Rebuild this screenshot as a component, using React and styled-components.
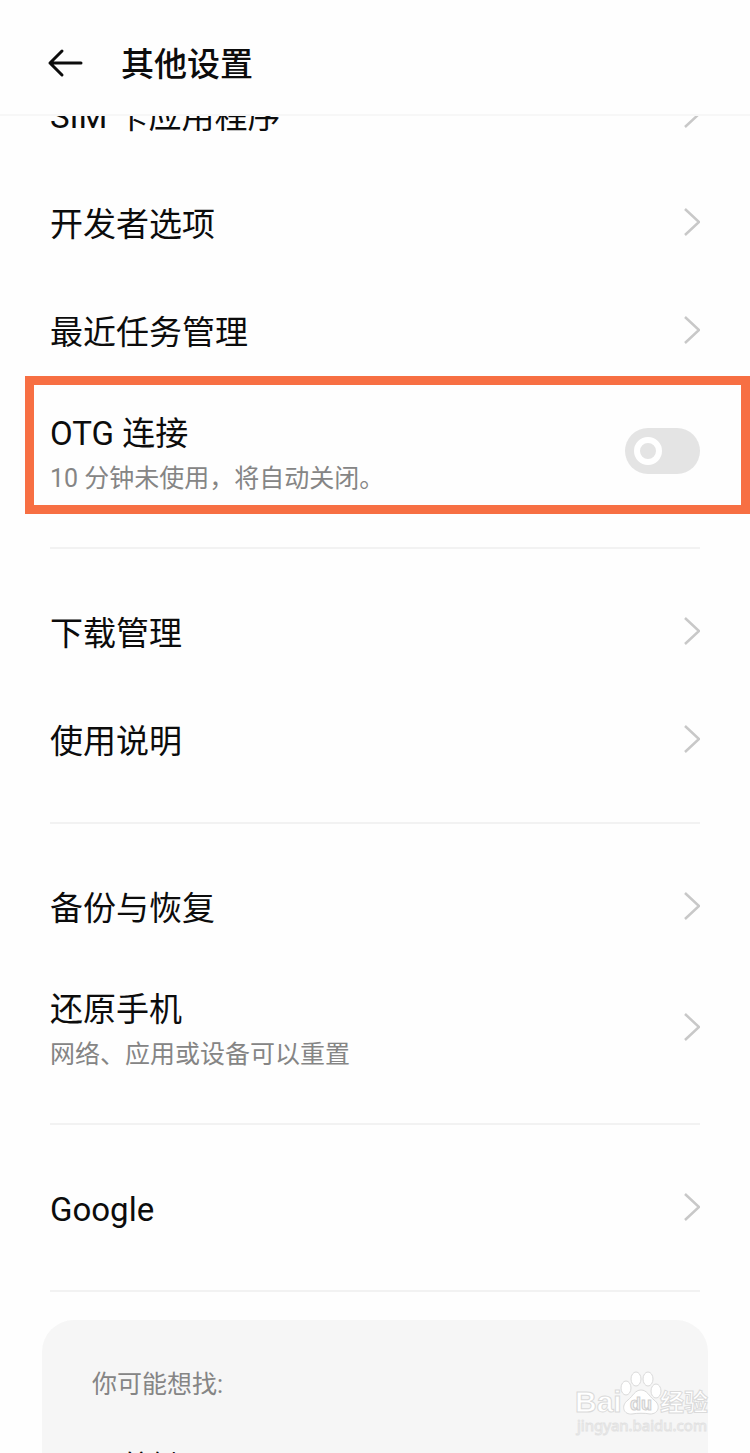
import React from 'react'
import styled, { createGlobalStyle } from 'styled-components'

const GlobalStyle = createGlobalStyle`
  *,
  *::before {
    box-sizing: border-box;
  }

  body {
    margin: 0;
    background: #fefefe;
    color: #0c0c0c;
    font-family: Roboto, 'Noto Sans CJK SC', sans-serif;
  }
`

const Screen = styled.div`
  position: relative;
  display: flex;
  flex-direction: column;
  height: 100vh;
  overflow: hidden;
`

const Header = styled.header`
  display: flex;
  flex: none;
  align-items: center;
  gap: 36px;
  padding: 36px 46px 24px;
  border-bottom: 2px solid #f7f7f7;
`

const BackButton = styled.button`
  display: flex;
  padding: 0;
  border: 0;
  background: none;
  color: inherit;
`

const PageTitle = styled.h1`
  margin: 0;
  padding-top: 4px;
  font-size: 33px;
  font-weight: 500;
  line-height: 50px;
`

const Content = styled.main`
  flex: 1;
  min-height: 0;
  overflow: hidden;
`

// the list is scrolled a little, so its first row slides under the header
const Scrolled = styled.div`
  margin-top: -56px;
`

const Group = styled.section`
  margin: 0 50px;
  padding-bottom: 29px;
  border-bottom: 2px solid #f2f2f2;

  & + & {
    padding-top: 28px;
  }
`

const Row = styled.div`
  position: relative;
  display: flex;
  align-items: center;
  justify-content: space-between;
  min-height: ${props => (props.$tall ? 134 : 108)}px;
  color: inherit;
  text-decoration: none;
`

const Label = styled.span`
  display: flex;
  flex-direction: column;
  padding-top: 6px;
`

const Name = styled.span`
  font-size: 33px;
  line-height: 50px;
`

const Note = styled.span`
  color: #858585;
  font-size: 25px;
  line-height: 40px;
`

const Switch = styled.input`
  appearance: none;
  display: flex;
  align-items: center;
  width: 75px;
  height: 46px;
  margin: 0;
  padding: 0 9px;
  border-radius: 23px;
  background: #e4e4e4;

  &::before {
    content: '';
    width: 28px;
    height: 28px;
    border: 6px solid #fff;
    border-radius: 50%;
  }

  &:checked {
    justify-content: flex-end;
    background: #2ac845;
  }
`

const Highlight = styled.div`
  position: absolute;
  top: -8px;
  right: -50px;
  bottom: 4px;
  left: -25px;
  border: 9px solid #f76f43;
  pointer-events: none;
`

const Suggestions = styled.aside`
  margin: 28px 42px 0;
  padding: 40px 50px;
  border-radius: 32px;
  background: #f6f6f6;
`

const SuggestTitle = styled.h2`
  margin: 0 0 32px;
  color: #858585;
  font-size: 25px;
  font-weight: 400;
  line-height: 50px;
`

const SuggestLink = styled.a`
  display: block;
  color: inherit;
  font-size: 30px;
  line-height: 50px;
  text-decoration: none;
`

const Watermark = styled.div`
  position: absolute;
  right: 38px;
  bottom: 11px;
`

const Arrow = () => (
  <svg width="18" height="30" viewBox="0 0 18 30" fill="none" stroke="#c8c8c8" strokeWidth="2.5">
    <path d="M3 2 L17 15 L3 28" />
  </svg>
)

const LinkRow = ({ name, note }) => (
  <Row as="a" href="#" $tall={Boolean(note)}>
    <Label>
      <Name>{name}</Name>
      {note && <Note>{note}</Note>}
    </Label>
    <Arrow />
  </Row>
)

const BaiduMark = () => (
  <svg width="138" height="68" viewBox="0 0 138 68" fill="#fff" stroke="#dadada" strokeWidth="1">
    <g fontFamily="'Liberation Sans', 'Noto Sans CJK SC', sans-serif" fontWeight="700">
      <text x="1" y="42" fontSize="30">Bai</text>
      <ellipse cx="52" cy="18" rx="5" ry="7" />
      <ellipse cx="62" cy="9" rx="5" ry="7" />
      <ellipse cx="74" cy="9" rx="5" ry="7" />
      <ellipse cx="82" cy="21" rx="5" ry="7" />
      <path d="M67 20 C61 20 59 26 54 30 C46 36 50 45 58 44 C63 43 71 43 76 44 C85 44 87 35 80 30 C75 26 73 20 67 20 Z" />
      <text x="56" y="40" fontSize="18" fill="#f3f3f3" stroke="#cfcfcf">du</text>
      <text x="86" y="41" fontSize="24">经验</text>
    </g>
    <text x="3" y="61" fontSize="15" stroke="#e2e2e2" fontFamily="'Noto Sans', sans-serif">jingyan.baidu.com</text>
  </svg>
)

export default () => {
  return (
    <Screen>
      <GlobalStyle />
      <Header>
        <BackButton type="button" aria-label="返回">
          <svg width="39" height="32" viewBox="0 0 39 32" fill="none" stroke="#0c0c0c" strokeWidth="3" strokeLinecap="round" strokeLinejoin="round">
            <path d="M35 16 H4 M16 4 L4 16 L16 28" />
          </svg>
        </BackButton>
        <PageTitle>其他设置</PageTitle>
      </Header>
      <Content>
        <Scrolled>
          <Group>
            <LinkRow name="SIM 卡应用程序" />
            <LinkRow name="开发者选项" />
            <LinkRow name="最近任务管理" />
            <Row as="label" $tall>
              <Label>
                <Name>OTG 连接</Name>
                <Note>10 分钟未使用，将自动关闭。</Note>
              </Label>
              <Switch type="checkbox" role="switch" />
              <Highlight />
            </Row>
          </Group>
          <Group>
            <LinkRow name="下载管理" />
            <LinkRow name="使用说明" />
          </Group>
          <Group>
            <LinkRow name="备份与恢复" />
            <LinkRow name="还原手机" note="网络、应用或设备可以重置" />
          </Group>
          <Group>
            <LinkRow name="Google" />
          </Group>
          <Suggestions>
            <SuggestTitle>你可能想找:</SuggestTitle>
            <SuggestLink href="#">导航键</SuggestLink>
          </Suggestions>
        </Scrolled>
      </Content>
      <Watermark>
        <BaiduMark />
      </Watermark>
    </Screen>
  )
}
